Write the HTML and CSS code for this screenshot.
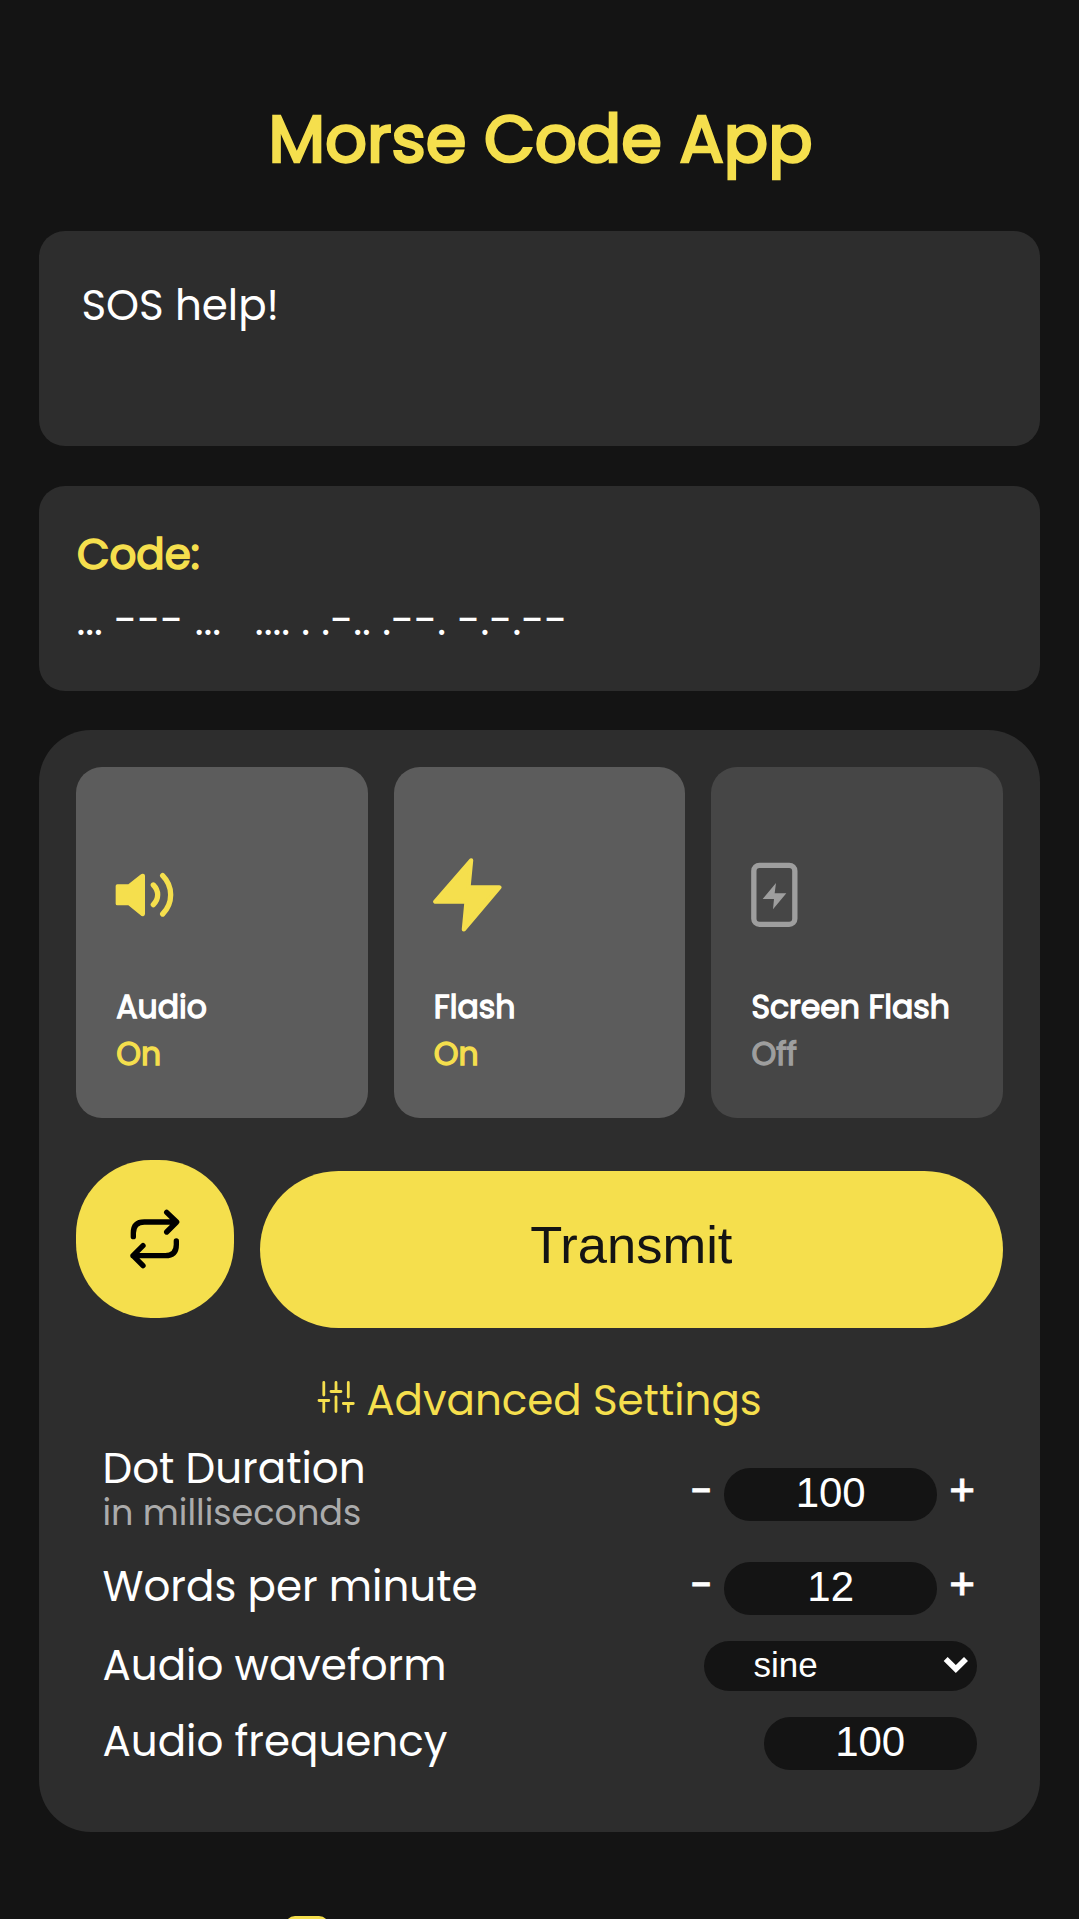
FILE: index.html
```html
<!DOCTYPE html>
<html lang="en">
<head>
<meta charset="utf-8">
<title>Morse Code App</title>
<link rel="stylesheet" href="styles.css">
</head>
<body>
<h1 class="title">Morse Code App</h1>
<main class="main">
  <div class="message"><span class="message-text">SOS help!</span></div>
  <section class="code">
    <h2 class="code-title">Code:</h2>
    <p class="morse">... --- ...   .... . .-.. .--. -.-.--</p>
  </section>
  <section class="panel">
    <div class="cards">
      <div class="card">
        <div class="card-icon">
          <svg width="60" height="48" viewBox="255 454 180 144" fill="none">
            <path d="M262 494h33l36-29q6-5 11-2q3 2 3 6v113q0 5-4 7q-5 2-10-3l-36-29h-33q-5 0-5-5v-53q0-5 5-5z" fill="#f5df4d"/>
            <path d="M370 496q13 13 13 29.500t-13 29.500M398 468q24 24 24 57.500t-24 57.500" stroke="#f5df4d" stroke-width="16" stroke-linecap="round"/>
          </svg>
        </div>
        <div class="card-name">Audio</div>
        <div class="card-state">On</div>
      </div>
      <div class="card">
        <div class="card-icon icon-shift">
          <svg width="69" height="75" viewBox="157 321 210 228">
            <path d="M273 331L164 457H259L251 541L359 413H265Z" fill="#f5df4d" stroke="#f5df4d" stroke-width="13" stroke-linejoin="round"/>
          </svg>
        </div>
        <div class="card-name">Flash</div>
        <div class="card-state">On</div>
      </div>
      <div class="card card-off">
        <div class="card-icon icon-shift">
          <svg width="48" height="66" viewBox="182 334 144 198" fill="none">
            <rect x="190.500" y="344" width="123" height="177" rx="17" stroke="#9e9e9e" stroke-width="16"/>
            <path d="M257 397L217 445H251L248 476L288 428H253Z" fill="#9e9e9e"/>
          </svg>
        </div>
        <div class="card-name">Screen Flash</div>
        <div class="card-state state-off">Off</div>
      </div>
    </div>
    <div class="actions">
      <button class="repeat" aria-label="Repeat">
        <svg width="52" height="60" viewBox="207 207 156 180" fill="none" stroke="#000" stroke-width="16" stroke-linecap="round" stroke-linejoin="round">
          <path d="M220 290v-11q0-33 33-33h96M320 217l30 29l-30 30M349 303v11q0 33-33 33h-97M249 317l-30 30l30 30"/>
        </svg>
      </button>
      <button class="transmit">Transmit</button>
    </div>
    <div class="advanced">
      <svg width="38" height="34" viewBox="0 0 38 34" fill="none" stroke="#f5df4d" stroke-width="2.800" stroke-linecap="round">
        <path d="M6.800 2.500v12.500M2 20.500h9.800M6.800 20.500V31.500M19 2.500v9M14 11.500h10M19 17v14.500M31.300 2.500v14.500M26.300 23.500h10M31.300 23.500v8"/>
      </svg>
      <span>Advanced Settings</span>
    </div>
    <div class="settings">
      <div class="row row-duration">
        <div class="label">Dot Duration<small class="hint">in milliseconds</small></div>
        <div class="stepper"><span class="minus">-</span><input class="field" value="100"><span class="plus">+</span></div>
      </div>
      <div class="row row-words">
        <div class="label">Words per minute</div>
        <div class="stepper"><span class="minus">-</span><input class="field" value="12"><span class="plus">+</span></div>
      </div>
      <div class="row row-wave">
        <div class="label">Audio waveform</div>
        <div class="select"><span>sine</span>
          <svg width="26" height="18" viewBox="848 108 78 54" fill="none" stroke="#fff" stroke-width="17"><path d="M856 117L886.500 147L917 117"/></svg>
        </div>
      </div>
      <div class="row row-freq">
        <div class="label">Audio frequency</div>
        <input class="field" value="100">
      </div>
    </div>
  </section>
</main>
<footer class="footer"><span class="footer-icon"></span></footer>
</body>
</html>
```

FILE: styles.css
```css
* { box-sizing: border-box; }
body {
  margin: 0;
  height: 1919px;
  overflow: hidden;
  display: flow-root;
  background: #141414;
  color: #fff;
  font-family: Poppins, Inter, sans-serif;
  font-size: 42px;
}
h1, h2, p { margin: 0; }
svg { display: block; flex: none; }
.title {
  margin-top: 89px;
  height: 100px;
  line-height: 100px;
  font-size: 65.7px;
  font-weight: 400;
  -webkit-text-stroke: 2.6px currentColor;
  text-align: center;
  text-indent: 2px;
  color: #f5df4d;
  white-space: nowrap;
}
.main { margin: 42px 39.4px 0; }
.message {
  height: 215px;
  padding: 50px 42px 0;
  line-height: 50px;
  border-radius: 26px;
  background: #2d2d2d;
}
.code {
  height: 205px;
  margin-top: 39.5px;
  padding: 44px 37px 0;
  border-radius: 26px;
  background: #2d2d2d;
}
.code-title {
  font-size: 42px;
  font-weight: 400;
  -webkit-text-stroke: 1.6px currentColor;
  line-height: 50px;
  text-indent: 0.6px;
  color: #f5df4d;
}
.morse {
  margin-top: 16px;
  height: 50px;
  line-height: 50px;
  white-space: pre;
}
.panel {
  margin-top: 39.5px;
  height: 1102.3px;
  padding: 36.8px 36.9px 0;
  border-radius: 52px;
  background: #2d2d2d;
}
.cards {
  display: grid;
  grid-template-columns: repeat(3, 1fr);
  gap: 26.250px;
}
.card {
  height: 351px;
  padding: 91px 0 0 39.4px;
  border-radius: 26px;
  background: #5c5c5c;
  font-size: 31.5px;
  -webkit-text-stroke: 1.3px currentColor;
  line-height: 47px;
  text-indent: 0.6px;
  white-space: nowrap;
}
.card-off { background: #464646; }
.card-icon {
  display: flex;
  align-items: center;
  height: 74px;
  margin-bottom: 52px;
  margin-left: -1px;
}
.icon-shift { margin-left: 0; }
.card-state { color: #f5df4d; }
.state-off { color: #9e9e9e; }
.actions {
  display: grid;
  grid-template-columns: 157.3px 1fr;
  gap: 26.300px;
  margin-top: 42.5px;
  height: 168.5px;
}
button { border: 0; padding: 0; background: #f5df4d; color: #141414; }
.repeat {
  display: flex;
  align-items: center;
  justify-content: center;
  height: 157.5px;
  border-radius: 75px;
}
.transmit {
  height: 157.5px;
  margin-top: 10.5px;
  padding-bottom: 10px;
  border-radius: 79px;
  font: 52.5px "Liberation Sans", Arial, sans-serif;
}
.advanced {
  display: flex;
  justify-content: center;
  gap: 11px;
  margin-top: 42px;
  height: 59.8px;
  line-height: 60px;
  color: #f5df4d;
  white-space: nowrap;
}
.advanced svg { margin-top: 9.5px; }
.settings { padding: 13.5px 26.200px 0; }
.row {
  display: flex;
  align-items: flex-start;
  justify-content: space-between;
  line-height: 48px;
  white-space: nowrap;
}
.label { padding-top: 1px; }
.row-duration { height: 88.5px; }
.row-duration .stepper { margin-top: 24px; }
.row-words { height: 52.5px; margin-top: 29.5px; }
.row-wave { height: 49.5px; margin-top: 26.5px; }
.row-freq { height: 52.5px; margin-top: 26.5px; }
.hint {
  display: block;
  font-size: 35px;
  line-height: 40px;
  color: #ababab;
}
.stepper { display: flex; align-items: flex-start; height: 52.5px; }
.minus, .plus {
  width: 29px;
  text-align: center;
  line-height: 47px;
  -webkit-text-stroke: 0.8px currentColor;
}
.minus { margin-right: 8px; }
.plus { margin-left: 10.5px; }
.field {
  width: 212.7px;
  height: 52.5px;
  border: 0;
  border-radius: 26.250px;
  padding: 0 1px 2px;
  background: #141414;
  color: #fff;
  text-align: center;
  font: 42px "Liberation Sans", Arial, sans-serif;
}
.select {
  display: flex;
  justify-content: space-between;
  align-items: flex-start;
  width: 273px;
  height: 49.5px;
  padding: 0 8px 0 50px;
  border-radius: 25px;
  background: #141414;
  font: 35px/48px "Liberation Sans", Arial, sans-serif;
}
.select svg { margin-top: 15px; }
.footer { margin-top: 83.5px; padding-left: 285px; }
.footer-icon {
  display: block;
  width: 44px;
  height: 58px;
  border: 3px solid #f5df4d;
  border-radius: 10px;
}
```
